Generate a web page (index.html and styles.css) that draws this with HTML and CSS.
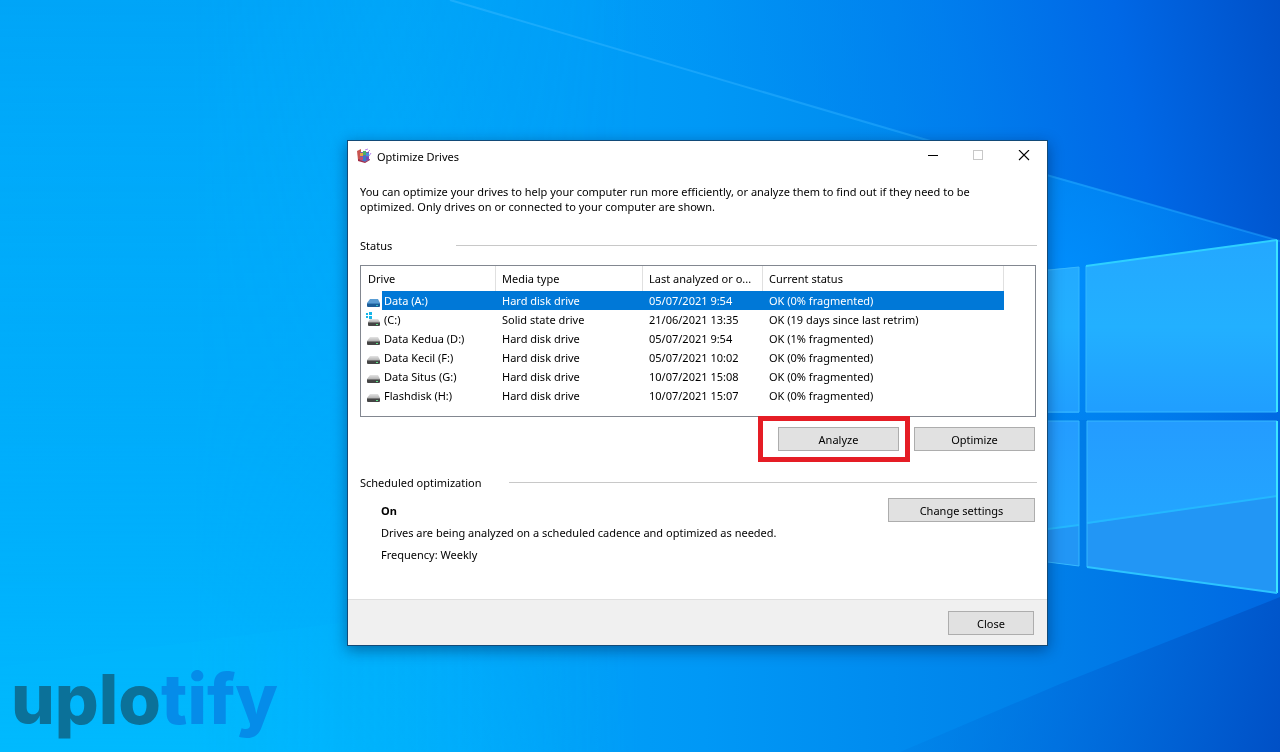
FILE: index.html
```html
<!DOCTYPE html>
<html lang="en">
<head>
<meta charset="utf-8">
<title>Optimize Drives</title>
<link rel="stylesheet" href="styles.css">
</head>
<body>
<svg class="wallpaper" viewBox="0 0 1280 752" preserveAspectRatio="none" aria-hidden="true">
  <defs>
    <linearGradient id="base" x1="0" y1="0" x2="1" y2="0">
      <stop offset="0" stop-color="#00acfb"/><stop offset=".3" stop-color="#00a9fb"/>
      <stop offset=".55" stop-color="#0098f6"/><stop offset=".8" stop-color="#0082ea"/><stop offset="1" stop-color="#0068e2"/>
    </linearGradient>
    <linearGradient id="lift" x1="0" y1="0" x2="0" y2="1">
      <stop offset="0" stop-color="#0096f0" stop-opacity=".3"/><stop offset=".5" stop-color="#00b4ff" stop-opacity=".1"/>
      <stop offset="1" stop-color="#00c0ff" stop-opacity=".65"/>
    </linearGradient>
    <linearGradient id="leftmask" x1="0" y1="0" x2="1" y2="0">
      <stop offset="0" stop-color="#fff"/><stop offset=".15" stop-color="#fff"/><stop offset=".5" stop-color="#000"/>
    </linearGradient>
    <mask id="left"><rect width="1280" height="752" fill="url(#leftmask)"/></mask>
    <linearGradient id="upper" gradientUnits="userSpaceOnUse" x1="620" y1="140" x2="1290" y2="20">
      <stop offset="0" stop-color="#0092f4" stop-opacity="0"/><stop offset=".5" stop-color="#007aee" stop-opacity=".7"/>
      <stop offset=".75" stop-color="#0068e6"/><stop offset="1" stop-color="#0050c8"/>
    </linearGradient>
    <linearGradient id="lower" gradientUnits="userSpaceOnUse" x1="860" y1="640" x2="1280" y2="752">
      <stop offset="0" stop-color="#0080e4" stop-opacity=".1"/><stop offset=".5" stop-color="#006cdc" stop-opacity=".7"/><stop offset="1" stop-color="#0050c6"/>
    </linearGradient>
    <linearGradient id="ray" gradientUnits="userSpaceOnUse" x1="450" y1="0" x2="1280" y2="0">
      <stop offset="0" stop-color="#35b8ff" stop-opacity=".5"/><stop offset="1" stop-color="#20a4ff" stop-opacity=".5"/>
    </linearGradient>
    <radialGradient id="glow" gradientUnits="userSpaceOnUse" cx="1060" cy="280" r="260">
      <stop offset="0" stop-color="#0090ff" stop-opacity=".9"/><stop offset="1" stop-color="#0088fa" stop-opacity="0"/>
    </radialGradient>
    <linearGradient id="pane" x1="0" y1="0" x2="0" y2="1">
      <stop offset="0" stop-color="#24a8ff"/><stop offset=".5" stop-color="#22b0ff"/><stop offset="1" stop-color="#209eff"/>
    </linearGradient>
    <linearGradient id="pane2" x1="0" y1="0" x2="0" y2="1">
      <stop offset="0" stop-color="#249cff"/><stop offset="1" stop-color="#22acff"/>
    </linearGradient>
  </defs>
  <rect width="1280" height="752" fill="url(#base)"/>
  <rect width="1280" height="752" fill="url(#lift)" mask="url(#left)"/>
  <path d="M0 667 347 622 700 580V752H0Z" fill="#00c0ff" opacity=".16" mask="url(#left)"/>
  <path d="M450 0 920 138 1280 241V0Z" fill="url(#upper)"/>
  <path d="M450 0 920 138 1280 241V420H800Z" fill="url(#glow)"/>
  <path d="M450 0 920 138 1050 176 1280 241" fill="none" stroke="url(#ray)" stroke-width="2"/>
  <path d="M1280 597 1060 684 900 752H1280Z" fill="url(#lower)"/>
  <path d="M1040 270 1079 267V413H1040ZM1086 266 1277 240V412H1086Z" fill="url(#pane)"/>
  <path d="M1040 421H1079V566L1040 561ZM1087 421H1277V593L1087 567Z" fill="url(#pane2)"/>
  <path d="M1040 531 1079 525V566L1040 561ZM1087 524 1277 496V593L1087 567Z" fill="#2296f5"/>
  <path d="M1040 530 1079 525M1087 523 1277 496" stroke="#24b8ff" stroke-width="2"/>
  <path d="M1040 271 1079 267V412H1040M1086 412V266M1086 412H1277M1040 421H1079V566L1040 561M1087 567V421H1277" fill="none" stroke="#35b8ff"/>
  <path d="M1086 266 1277 240" stroke="#2ed0ff" stroke-width="2"/>
  <path d="M1277 240V412M1277 421V593" stroke="#3ce4ff" stroke-width="2"/>
  <path d="M1087 567 1277 593" stroke="#2cc4ff" stroke-width="2"/>
</svg>

<svg class="symbols" aria-hidden="true">
  <linearGradient id="lid" x1="0" y1="0" x2="0" y2="1"><stop offset="0" stop-color="#e4e4e4"/><stop offset="1" stop-color="#b4b4b4"/></linearGradient>
  <symbol id="hdd" viewBox="0 0 16 16">
    <path d="M4 6H12L14 10H1Z" fill="url(#lid)"/>
    <rect x="1" y="10" width="13" height="4" rx="1" fill="#454545"/><path d="M1 10.500H14" stroke="#777"/>
    <rect x="10" y="12" width="2" height="1" fill="#5fe38a"/>
  </symbol>
  <symbol id="hdd-selected" viewBox="0 0 16 16">
    <path d="M4 6H12L14 10H1Z" fill="#5a9dd4"/>
    <rect x="1" y="10" width="13" height="4" rx="1" fill="#1c5d98"/><path d="M1 10.500H14" stroke="#3c82bd"/>
    <rect x="10" y="12" width="2" height="1" fill="#35c5c8"/>
  </symbol>
  <symbol id="ssd" viewBox="0 0 16 16">
    <path d="M4 7H12L14 10H2Z" fill="url(#lid)"/>
    <rect x="2" y="10" width="12" height="4" rx="1" fill="#454545"/><path d="M2 10.500H14" stroke="#777"/>
    <rect x="10" y="12" width="2" height="1" fill="#5fe38a"/>
    <path d="M0 1H2V3H0ZM3 0H6V3H3ZM0 4H2V6H0ZM3 4H6V7H3Z" fill="#16b5e8"/>
  </symbol>
</svg>

<div class="brand"><span class="brand-dark">uplo</span><span class="brand-blue">tify</span></div>

<main class="window">
  <header class="titlebar">
    <svg class="app-icon" viewBox="0 0 16 16" aria-hidden="true">
      <path d="M1 3 5 1V13L2 12Z" fill="#c85450"/><path d="M2 11 9 13 14 11V12L9 15 2 13Z" fill="#a32e46"/>
      <path d="M4 4H13V12L9 14 4 12Z" fill="#7a5fa8"/>
      <path d="M4 5H7V8H4Z" fill="#e7a33c"/><path d="M7 3H10V7H7Z" fill="#4cae68"/><path d="M10 5H13V8H10Z" fill="#468ee0"/>
      <path d="M4 9H7V12H4Z" fill="#c44b75"/><path d="M7 8H10V13H7Z" fill="#3a79c8"/><path d="M10 9H13V12H10Z" fill="#7447b8"/>
      <path d="M9 2 12 1M12 4 14 2M13 8 15 5" stroke="#b885ed"/>
    </svg>
    <h1 class="title">Optimize Drives</h1>
    <div class="controls">
      <button class="control" type="button" aria-label="Minimize"><svg viewBox="0 0 12 12"><path d="M2 5.500H12" stroke="#000"/></svg></button>
      <button class="control" type="button" aria-label="Maximize" disabled><svg viewBox="0 0 12 12"><rect x="1.500" y=".5" width="9" height="9" fill="none" stroke="#c8c8c8"/></svg></button>
      <button class="control" type="button" aria-label="Close window"><svg viewBox="0 0 12 12"><path d="M1 0 11 10M11 0 1 10" stroke="#000" stroke-width="1.100"/></svg></button>
    </div>
  </header>

  <div class="content">
    <p class="intro">You can optimize your drives to help your computer run more efficiently, or analyze them to find out if they need to be<br>optimized. Only drives on or connected to your computer are shown.</p>

    <h2 class="section status-heading"><span class="section-label">Status</span></h2>

    <div class="list">
      <table class="drives">
        <colgroup><col class="col-drive"><col class="col-media"><col class="col-last"><col class="col-status"></colgroup>
        <thead><tr><th>Drive</th><th>Media type</th><th>Last analyzed or o...</th><th>Current status</th></tr></thead>
        <tbody>
          <tr class="selected"><td><div class="drive"><svg class="drive-icon"><use href="#hdd-selected"/></svg><span class="name">Data (A:)</span></div></td><td>Hard disk drive</td><td>05/07/2021 9:54</td><td>OK (0% fragmented)</td></tr>
          <tr><td><div class="drive"><svg class="drive-icon"><use href="#ssd"/></svg><span class="name">(C:)</span></div></td><td>Solid state drive</td><td>21/06/2021 13:35</td><td>OK (19 days since last retrim)</td></tr>
          <tr><td><div class="drive"><svg class="drive-icon"><use href="#hdd"/></svg><span class="name">Data Kedua (D:)</span></div></td><td>Hard disk drive</td><td>05/07/2021 9:54</td><td>OK (1% fragmented)</td></tr>
          <tr><td><div class="drive"><svg class="drive-icon"><use href="#hdd"/></svg><span class="name">Data Kecil (F:)</span></div></td><td>Hard disk drive</td><td>05/07/2021 10:02</td><td>OK (0% fragmented)</td></tr>
          <tr><td><div class="drive"><svg class="drive-icon"><use href="#hdd"/></svg><span class="name">Data Situs (G:)</span></div></td><td>Hard disk drive</td><td>10/07/2021 15:08</td><td>OK (0% fragmented)</td></tr>
          <tr><td><div class="drive"><svg class="drive-icon"><use href="#hdd"/></svg><span class="name">Flashdisk (H:)</span></div></td><td>Hard disk drive</td><td>10/07/2021 15:07</td><td>OK (0% fragmented)</td></tr>
        </tbody>
      </table>
    </div>

    <div class="actions">
      <div class="highlight"><button class="button" type="button">Analyze</button></div>
      <button class="button" type="button">Optimize</button>
    </div>

    <h2 class="section schedule-heading"><span class="section-label">Scheduled optimization</span></h2>
    <div class="schedule">
      <div class="schedule-text">
        <p class="state">On</p>
        <p>Drives are being analyzed on a scheduled cadence and optimized as needed.</p>
        <p>Frequency: Weekly</p>
      </div>
      <button class="button button-wide" type="button">Change settings</button>
    </div>
  </div>

  <footer class="footer"><button class="button button-close" type="button">Close</button></footer>
</main>
</body>
</html>
```
FILE: styles.css
```css
* { box-sizing: border-box; }

body {
  margin: 0;
  min-height: 100vh;
  overflow: hidden;
  background: #00a2f8;
  color: #000;
  font: 11px/15px "Noto Sans", "Open Sans", sans-serif;
}

h1, h2, p { margin: 0; font-size: inherit; font-weight: normal; }

.wallpaper { position: fixed; inset: 0; width: 100%; height: 100%; }
.symbols { position: absolute; width: 0; height: 0; }

.brand {
  position: absolute;
  left: 11px;
  bottom: 13px;
  font: 800 69px/80px Inter, sans-serif;
}
.brand-dark { color: #0b7199; }
.brand-blue { color: #058ce9; }

.window {
  position: absolute;
  left: 347px;
  right: 232px;
  top: 140px;
  background: #fff;
  border: 1px solid #124a78;
  box-shadow: 0 4px 14px rgba(0, 20, 60, .45);
}

.titlebar { display: flex; align-items: center; height: 30px; padding-left: 8px; }
.app-icon { width: 16px; height: 16px; margin-right: 5px; }
.controls { display: flex; margin-left: auto; }
.control {
  display: grid;
  place-items: center;
  width: 46px;
  height: 30px;
  padding: 0;
  border: 0;
  background: none;
}
.control svg { width: 12px; height: 12px; }

.content { padding: 13px 12px 37px; }
.intro { white-space: nowrap; }

.section { display: flex; align-items: center; margin-right: -2px; }
.section::after { content: ""; flex: 1; height: 1px; background: #c8c8c8; }
.status-heading { margin-top: 24px; }
.status-heading .section-label { width: 96px; }
.schedule-heading { margin-top: 13px; }
.schedule-heading .section-label { width: 149px; }

.list { height: 152px; margin-top: 12px; margin-right: -1px; border: 1px solid #828790; }

.drives { width: 643px; border-spacing: 0; table-layout: fixed; }
.col-drive { width: 135px; }
.col-media { width: 147px; }
.col-last { width: 120px; }
.drives th {
  height: 25px;
  padding: 0 0 0 6px;
  border-right: 1px solid #e0e0e0;
  font-weight: normal;
  text-align: left;
  white-space: nowrap;
}
.drives th:first-child { padding-left: 7px; }
.drives td { height: 19px; padding: 0 0 0 6px; white-space: nowrap; }
.drives td:first-child { padding-left: 5px; }
.drive { display: flex; height: 19px; }
.drive-icon { width: 16px; height: 16px; margin-top: 2px; }
.name { flex: 1; padding-left: 2px; line-height: 19px; }
.selected { color: #fff; }
.selected td:not(:first-child), .selected .name { background: #0078d7; }

.actions { display: flex; justify-content: flex-end; align-items: center; gap: 4px; margin-top: -1px; }
.highlight { padding: 6px 6px 6px 15px; border: 5px solid #e51d25; }

.button {
  width: 121px;
  height: 24px;
  padding: 0;
  border: 1px solid #adadad;
  background: #e1e1e1;
  color: #000;
  font: inherit;
}
.button-wide { width: 147px; }
.button-close { width: 86px; }

.schedule { display: flex; align-items: flex-start; justify-content: space-between; margin-top: 8px; }
.schedule-text { display: grid; gap: 7px; padding: 5px 0 0 21px; }
.state { font-weight: bold; }

.footer {
  display: flex;
  justify-content: flex-end;
  padding: 11px 13px 10px;
  border-top: 1px solid #dfdfdf;
  background: #f0f0f0;
}
```
